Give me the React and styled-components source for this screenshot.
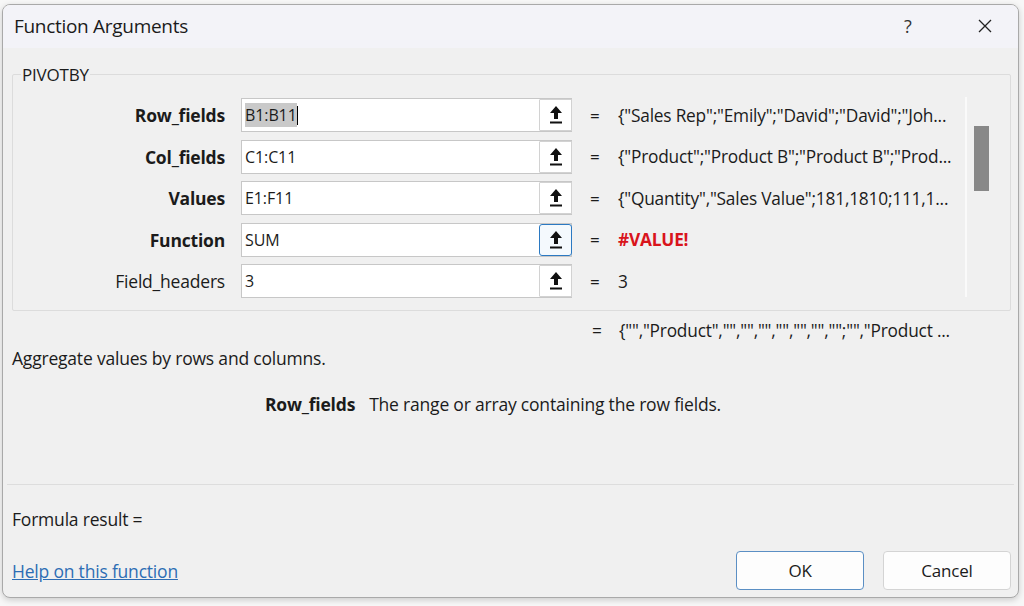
import React from "react";
import styled, { createGlobalStyle } from "styled-components";

const Global = createGlobalStyle`
  html, body { margin: 0; padding: 0; }
  body {
    background: #f7f7f7;
    font-family: "Open Sans", "Noto Sans", Arial, sans-serif;
    color: #1b1b1b;
  }
`;

const Page = styled.div`
  width: 1024px;
  height: 606px;
  box-sizing: border-box;
  padding: 4px 5px 8px 2px;
  background: #f7f7f7;
`;

const Dialog = styled.div`
  height: 100%;
  box-sizing: border-box;
  border: 1px solid #a9a9a9;
  border-radius: 8px;
  overflow: hidden;
  display: flex;
  flex-direction: column;
  background: #f0f0f0;
  box-shadow: 0 2px 6px rgba(0, 0, 0, 0.18);
`;

const TitleBar = styled.div`
  height: 43px;
  flex: none;
  display: flex;
  align-items: center;
  background: #f3f3f8;
  padding: 0 0 0 11px;
`;

const Title = styled.div`
  font-size: 19px;
  flex: 1;
  letter-spacing: -0.3px;
  margin-top: -2px;
`;

const TitleButton = styled.div`
  width: ${(p) => p.$w}px;
  margin-left: ${(p) => p.$ml || 0}px;
  display: flex;
  justify-content: center;
  align-items: center;
  font-size: 18px;
  color: #333;
  margin-top: -2px;
`;

const Body = styled.div`
  flex: 1;
  display: flex;
  flex-direction: column;
  padding: 0 7px 0 9px;
`;

const Group = styled.fieldset`
  margin: 15px 0 0 0;
  padding: 12px 0 12px 0;
  border: 1px solid #dcdcdc;
  border-radius: 2px;
  display: flex;
`;

const Legend = styled.legend`
  font-size: 17px;
  padding: 0 1px;
  margin-left: 8px;
  letter-spacing: -0.2px;
  color: #1b1b1b;
`;

const Rows = styled.div`
  flex: 1;
  display: grid;
  grid-template-columns: 228px 331px 46px 1fr;
  row-gap: 7.5px;
  align-items: center;
`;

const Label = styled.div`
  font-size: 17.5px;
  font-weight: ${(p) => (p.$bold ? 700 : 400)};
  text-align: right;
  padding-right: 16px;
  letter-spacing: -0.2px;
  color: #1b1b1b;
`;

const InputBox = styled.div`
  height: 34px;
  box-sizing: border-box;
  border: 1px solid #c7c7c7;
  background: #fff;
  display: flex;
  align-items: center;
`;

const InputText = styled.div`
  flex: 1;
  font-size: 16px;
  padding-left: 3px;
  display: flex;
  align-items: center;
  letter-spacing: -0.1px;
`;

const Selected = styled.span`
  background: #c9c9c9;
  padding: 1px 0;
`;

const Caret = styled.span`
  display: inline-block;
  width: 1px;
  height: 19px;
  background: #000;
`;

const RefButton = styled.div`
  width: 33px;
  height: 32px;
  box-sizing: border-box;
  border: 1px solid ${(p) => (p.$focus ? "#2b79c2" : "#d2d2d2")};
  border-radius: ${(p) => (p.$focus ? "3px" : "1px")};
  background: ${(p) => (p.$focus ? "#f4f9fd" : "#fff")};
  display: flex;
  align-items: center;
  justify-content: center;
  margin-right: -1px;
`;

const Eq = styled.div`
  font-size: 17px;
  padding-left: 18px;
  color: #1b1b1b;
`;

const Value = styled.div`
  font-size: 17.3px;
  white-space: nowrap;
  letter-spacing: -0.2px;
  color: ${(p) => (p.$error ? "#d9141c" : "#1b1b1b")};
  font-weight: ${(p) => (p.$error ? 700 : 400)};
`;

const ScrollArea = styled.div`
  width: 43px;
  flex: none;
  display: flex;
  align-self: stretch;
  border-left: 2px solid #fafafa;
  margin: -1px 0 1px 0;
`;

const Thumb = styled.div`
  width: 15px;
  height: 65px;
  background: #888;
  margin: 29px 0 0 7px;
`;

const ResultLine = styled.div`
  display: flex;
  align-items: center;
  height: 22px;
  margin-top: 8px;
  padding-left: 580px;
  font-size: 17.3px;
  letter-spacing: -0.2px;
  white-space: nowrap;
`;

const EqSmall = styled.span`
  width: 27px;
  flex: none;
`;

const Description = styled.div`
  font-size: 17.5px;
  margin-top: 5px;
  padding-left: 0;
  letter-spacing: -0.2px;
`;

const ArgHelp = styled.div`
  font-size: 17.5px;
  margin-top: 22px;
  padding-left: 253px;
  display: flex;
  gap: 14px;
  letter-spacing: -0.2px;
`;

const Bold = styled.span`
  font-weight: 700;
`;

const Separator = styled.div`
  height: 1px;
  background: #dddddd;
  margin: 68px -3px 0 -5px;
`;

const FormulaResult = styled.div`
  font-size: 17.5px;
  margin-top: 22px;
  padding-left: 0;
  letter-spacing: -0.2px;
`;

const Footer = styled.div`
  display: flex;
  align-items: center;
  margin-top: 20px;
  padding-left: 0;
`;

const HelpLink = styled.a`
  flex: 1;
  font-size: 17.5px;
  color: #2d6db4;
  text-decoration: underline;
  letter-spacing: -0.2px;
  cursor: pointer;
`;

const Button = styled.div`
  width: 128px;
  height: 39px;
  box-sizing: border-box;
  border: 1px solid ${(p) => (p.$primary ? "#5b8fc4" : "#d4d4d4")};
  border-radius: 4px;
  background: #fdfdfd;
  display: flex;
  align-items: center;
  justify-content: center;
  font-size: 17px;
  margin-left: ${(p) => p.$ml || 0}px;
  letter-spacing: -0.2px;
`;

const RefIcon = () => (
  <svg width="14" height="20" viewBox="0 0 14 20">
    <path d="M7 1 L13 8 L9 8 L9 14 L5 14 L5 8 L1 8 Z" fill="#111" />
    <rect x="1" y="16.5" width="12" height="2" fill="#111" />
  </svg>
);

const CloseIcon = () => (
  <svg width="16" height="16" viewBox="0 0 16 16">
    <path d="M2 2 L14 14 M14 2 L2 14" stroke="#222" strokeWidth="1.3" fill="none" />
  </svg>
);

const rows = [
  { label: "Row_fields", bold: true, value: '{"Sales Rep";"Emily";"David";"David";"Joh...' },
  { label: "Col_fields", bold: true, input: "C1:C11", value: '{"Product";"Product B";"Product B";"Prod...' },
  { label: "Values", bold: true, input: "E1:F11", value: '{"Quantity","Sales Value";181,1810;111,1...' },
  { label: "Function", bold: true, input: "SUM", value: "#VALUE!", error: true, focus: true },
  { label: "Field_headers", bold: false, input: "3", value: "3" },
];

export default function App() {
  return (
    <>
      <Global />
      <Page>
        <Dialog>
          <TitleBar>
            <Title>Function Arguments</Title>
            <TitleButton $w={26}>?</TitleButton>
            <TitleButton $w={66} $ml={31}>
              <CloseIcon />
            </TitleButton>
          </TitleBar>
          <Body>
            <Group>
              <Legend>PIVOTBY</Legend>
              <Rows>
                {rows.map((r, i) => (
                  <React.Fragment key={r.label}>
                    <Label $bold={r.bold}>{r.label}</Label>
                    <InputBox>
                      <InputText>
                        {i === 0 ? (
                          <>
                            <Selected>B1:B11</Selected>
                            <Caret />
                          </>
                        ) : (
                          r.input
                        )}
                      </InputText>
                      <RefButton $focus={r.focus}>
                        <RefIcon />
                      </RefButton>
                    </InputBox>
                    <Eq>=</Eq>
                    <Value $error={r.error}>{r.value}</Value>
                  </React.Fragment>
                ))}
              </Rows>
              <ScrollArea>
                <Thumb />
              </ScrollArea>
            </Group>
            <ResultLine>
              <EqSmall>=</EqSmall>
              <span>{'{"","Product","","","","","","","";"","Product ...'}</span>
            </ResultLine>
            <Description>Aggregate values by rows and columns.</Description>
            <ArgHelp>
              <Bold>Row_fields</Bold>
              <span>The range or array containing the row fields.</span>
            </ArgHelp>
            <Separator />
            <FormulaResult>Formula result =</FormulaResult>
            <Footer>
              <HelpLink>Help on this function</HelpLink>
              <Button $primary>OK</Button>
              <Button $ml={19}>Cancel</Button>
            </Footer>
          </Body>
        </Dialog>
      </Page>
    </>
  );
}
